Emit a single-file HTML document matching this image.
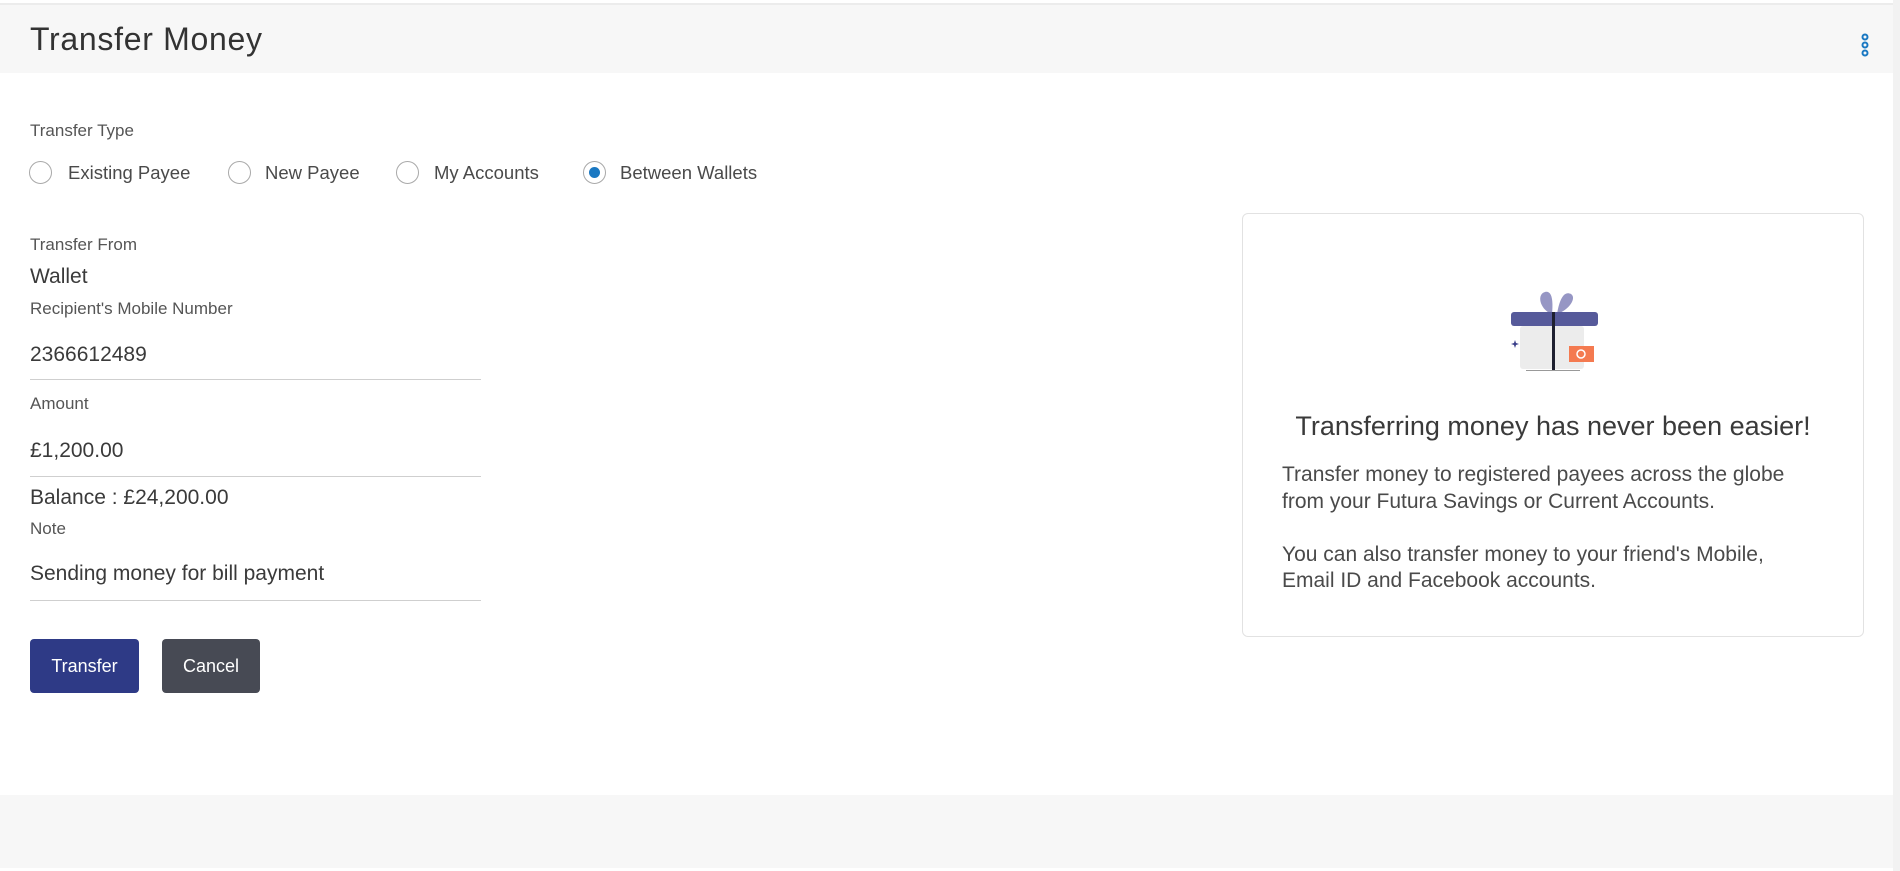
<!DOCTYPE html>
<html><head><meta charset="utf-8"><style>
*{margin:0;padding:0;box-sizing:border-box}
body{width:1900px;height:871px;background:#fff;font-family:"Liberation Sans",sans-serif;color:#333;position:relative;overflow:hidden}
.a{position:absolute;white-space:nowrap}
.hdr{position:absolute;left:0;top:3px;width:1893px;height:70px;background:#f7f7f7;border-top:2px solid #ececec}
.lbl{font-size:17px;color:#555}
.val{font-size:21px;color:#3a3a3a}
.line{position:absolute;left:30px;width:451px;height:1px;background:#cfcfcf}
.r{position:absolute;width:23px;height:23px;border:1px solid #a9a9a9;border-radius:50%;background:#fff}
.rl{position:absolute;white-space:nowrap;top:162px;font-size:18.5px;color:#4a4a4a}
.btn{position:absolute;top:639px;height:54px;border-radius:4px;color:#fff;font-size:18px;text-align:center;line-height:54px}
</style></head><body>
<div class="hdr"></div>
<div class="a" style="left:30px;top:21px;font-size:32px;color:#333;letter-spacing:0.7px">Transfer Money</div>
<svg class="a" style="left:1859px;top:33px" width="12" height="26"><g fill="none" stroke="#1a78c2" stroke-width="2"><circle cx="6" cy="4" r="2.5"/><circle cx="6" cy="12" r="2.5"/><circle cx="6" cy="20" r="2.5"/></g></svg>
<div class="a" style="left:1893px;top:0;width:7px;height:871px;background:#f2f2f2"></div>
<div class="a" style="left:0;top:795px;width:1893px;height:73px;background:#f7f7f7"></div>

<div class="a lbl" style="left:30px;top:121px">Transfer Type</div>
<div class="r" style="left:29px;top:161px"></div>
<div class="rl" style="left:68px">Existing Payee</div>
<div class="r" style="left:228px;top:161px"></div>
<div class="rl" style="left:265px">New Payee</div>
<div class="r" style="left:396px;top:161px"></div>
<div class="rl" style="left:434px">My Accounts</div>
<div class="r" style="left:583px;top:161px"><div style="position:absolute;left:5px;top:5px;width:11px;height:11px;border-radius:50%;background:#1a78c2"></div></div>
<div class="rl" style="left:620px">Between Wallets</div>

<div class="a lbl" style="left:30px;top:235px">Transfer From</div>
<div class="a val" style="left:30px;top:265px">Wallet</div>
<div class="a lbl" style="left:30px;top:299px">Recipient's Mobile Number</div>
<div class="a val" style="left:30px;top:343px">2366612489</div>
<div class="line" style="top:379px"></div>
<div class="a lbl" style="left:30px;top:394px">Amount</div>
<div class="a val" style="left:30px;top:439px">£1,200.00</div>
<div class="line" style="top:476px"></div>
<div class="a val" style="left:30px;top:486px">Balance : £24,200.00</div>
<div class="a lbl" style="left:30px;top:519px">Note</div>
<div class="a val" style="left:30px;top:562px">Sending money for bill payment</div>
<div class="line" style="top:600px"></div>

<div class="btn" style="left:30px;width:109px;background:#2e3a86">Transfer</div>
<div class="btn" style="left:162px;width:98px;background:#474a54">Cancel</div>

<div class="a" style="left:1242px;top:213px;width:622px;height:424px;border:1px solid #e2e2e2;border-radius:6px"></div>
<svg class="a" style="left:1509px;top:288px" width="90" height="86" viewBox="0 0 90 86">
<path d="M42 26 C30 20 28 6 36 4 C44 2 44 16 43 26Z" fill="#9696c4"/>
<path d="M48 26 C50 14 54 2 62 6 C68 10 60 22 48 26Z" fill="#9696c4"/>
<rect x="11" y="38" width="64" height="43" rx="3" fill="#ececec"/>
<rect x="2" y="24" width="87" height="14" rx="3" fill="#565a9a"/>
<rect x="43" y="24" width="3" height="59" fill="#1e2030"/>
<rect x="17" y="82" width="54" height="1" fill="#999"/>
<rect x="60" y="58" width="25" height="16" fill="#f47a50"/>
<circle cx="72" cy="66" r="4" fill="none" stroke="#fff" stroke-width="1.5"/>
<path d="M6 52 l1 3 3 1 -3 1 -1 3 -1 -3 -3 -1 3 -1z" fill="#3a3f8a"/>
</svg>
<div class="a" style="left:1242px;top:411px;width:622px;text-align:center;font-size:27px;color:#3a3a3a">Transferring money has never been easier!</div>
<div class="a" style="left:1282px;top:462px;font-size:21px;line-height:26.5px;color:#4a4a4a">Transfer money to registered payees across the globe<br>from your Futura Savings or Current Accounts.<br><br>You can also transfer money to your friend's Mobile,<br>Email ID and Facebook accounts.</div>
</body></html>
